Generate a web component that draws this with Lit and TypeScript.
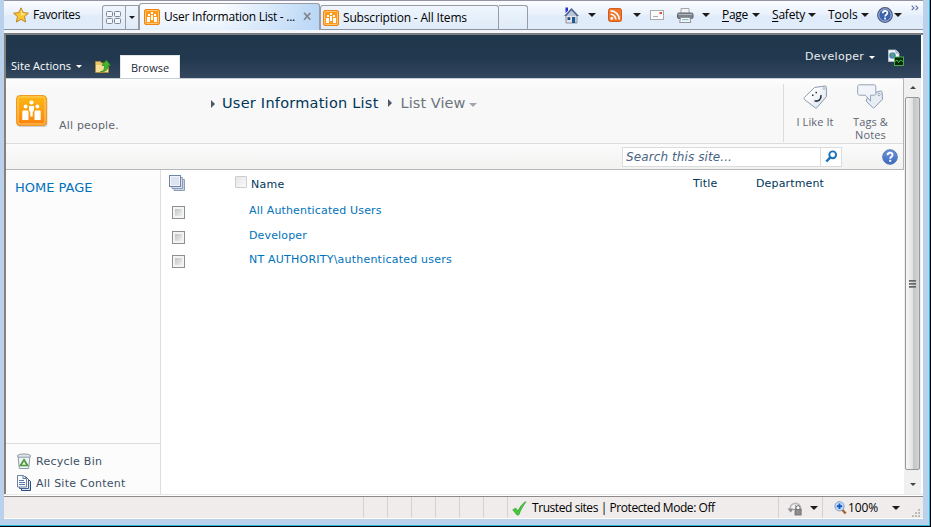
import { LitElement, html, css, svg, nothing } from "lit";
import { customElement, property } from "lit/decorators.js";

const icons: Record<string, { box: string; art: unknown }> = {
  star: { box: "0 0 16 16", art: svg`
    <path d="M8 .8l2.2 4.8 5.2.6-3.9 3.5 1.1 5.3L8 12.3l-4.6 2.7 1.1-5.3L.6 6.2l5.2-.6z" fill="#fbc62f" stroke="#b97a1e" stroke-width=".9"/>
    <path d="M8 2.6l1.5 3.6 3.6.5L8 9z" fill="#ffe88c"/>` },
  quad: { box: "0 0 16 14", art: svg`
    <g fill="#f4f7fb" stroke="#7f8797" stroke-width="1"><rect x=".5" y=".5" width="6" height="5" rx="1"/><rect x="8.5" y=".5" width="6" height="5" rx="1"/><rect x=".5" y="7.5" width="6" height="5" rx="1"/><rect x="8.5" y="7.5" width="6" height="5" rx="1"/></g>` },
  site: { box: "0 0 32 32", art: svg`
    <defs><linearGradient id="o" x2="0" y2="1"><stop offset="0" stop-color="#fdb913"/><stop offset=".6" stop-color="#fb9a10"/><stop offset="1" stop-color="#f8800f"/></linearGradient></defs>
    <rect x="1" y="1.5" width="30.5" height="30.5" rx="3.5" fill="#cfcfd3"/>
    <rect x=".5" y=".5" width="30" height="30" rx="3.5" fill="url(#o)" stroke="#f29a1f"/>
    <rect x="2" y="2" width="27" height="27" rx="2.5" fill="none" stroke="#ffd070"/>
    <g fill="#fff"><circle cx="15.5" cy="7.5" r="2.1"/><circle cx="9.6" cy="11.5" r="1.9"/><circle cx="21.4" cy="11.5" r="1.9"/>
    <path d="M13 11h5v4.500l-1.300 1.500v4.500h-2.400v-4.500l-1.300-1.500z"/>
    <path d="M7.500 15.500h3.500c.9 0 1.500.6 1.500 1.500v8H6.300v-8.300c0-.7.5-1.200 1.200-1.200zM23.500 15.500H20c-.9 0-1.500.6-1.500 1.500v8h6.200v-8.300c0-.7-.5-1.200-1.200-1.200z"/></g>` },
  tabsite: { box: "0 0 16 16", art: svg`
    <rect x=".5" y=".5" width="15" height="15" rx="1.500" fill="#fb9a1c" stroke="#f08516"/>
    <rect x="1.500" y="1.500" width="13" height="13" rx="1" fill="none" stroke="#ffc672"/>
    <g fill="#fff"><rect x="7" y="3" width="2" height="2"/><rect x="7" y="6" width="2" height="5"/><rect x="4" y="5" width="2" height="2"/><rect x="10" y="5" width="2" height="2"/><rect x="3" y="8" width="3" height="5"/><rect x="10" y="8" width="3" height="5"/></g>` },
  close: { box: "0 0 10 10", art: svg`<path d="M1.200 1l7 7.600M8.200 1l-7 7.600" stroke="#84868b" stroke-width="1.900"/>` },
  home: { box: "0 0 17 17", art: svg`
    <path d="M3 8.500h11v7.500H3z" fill="#e4e5ec" stroke="#85889a" stroke-width=".9"/>
    <path d="M2.500.500H5v3L2.500 6z" fill="#2a30cc"/>
    <path d="M8.500 1L16 9h-2.500L8.500 3.800 3.500 9H1z" fill="#4d6592"/><path d="M8.500 3.500L13.500 9h-10z" fill="#b9c6da"/>
    <rect x="9" y="10" width="3.200" height="6" fill="#1f5a94"/><rect x="4.500" y="10.200" width="2.800" height="2.800" fill="#30507c"/>` },
  rss: { box: "0 0 14 14", art: svg`
    <rect x=".5" y=".5" width="13" height="13" rx="2" fill="#ed762d" stroke="#cf5c1d"/>
    <circle cx="3.800" cy="10.400" r="1.400" fill="#fff"/><path d="M2.600 6.300a5.200 5.200 0 0 1 5.200 5.200M2.600 2.900a8.600 8.600 0 0 1 8.600 8.600" fill="none" stroke="#fff" stroke-width="1.600"/>` },
  mail: { box: "0 0 14 10", art: svg`
    <rect x=".5" y=".5" width="13" height="9" fill="#fafafa" stroke="#a9a9ad"/><rect x="9.500" y="2" width="2.500" height="2" fill="#e0503c"/><path d="M3 6.500h5" stroke="#aab"/>` },
  print: { box: "0 0 17 15", art: svg`
    <path d="M4 .5h8v5H4z" fill="#f3f3f5" stroke="#a5a8ae"/>
    <rect x=".5" y="5" width="15.500" height="5.500" rx="1.500" fill="#7e838b" stroke="#5c6169"/>
    <path d="M1.500 6.400h13.500" stroke="#b9bdc4"/><path d="M3.500 9.500h9.500l.8 5H2.700z" fill="#f7f8fa" stroke="#8f949c"/><path d="M5 11.700h6.500" stroke="#73b3b9"/>` },
  help: { box: "0 0 16 16", art: svg`
    <defs><linearGradient id="h" x2="0" y2="1"><stop offset="0" stop-color="#6f96dc"/><stop offset="1" stop-color="#3a66c0"/></linearGradient></defs>
    <circle cx="8" cy="8" r="7.300" fill="url(#h)" stroke="#5475b3"/>
    <path d="M5.600 6.300c0-3.500 5-3.300 4.900-.3 0 1.700-2.300 1.800-2.300 3.700" fill="none" stroke="#fff" stroke-width="1.900"/><rect x="7.200" y="10.800" width="2" height="2" fill="#fff"/>` },
  helpdark: { box: "0 0 16 16", art: svg`
    <circle cx="8" cy="8" r="7.300" fill="#3c62ae" stroke="#4c5878" stroke-width="1.200"/><circle cx="8" cy="8" r="6.200" fill="none" stroke="#b5c6e6" stroke-width=".9"/>
    <path d="M5.700 6.300c0-3.300 4.800-3.200 4.700-.3 0 1.700-2.300 1.800-2.300 3.500" fill="none" stroke="#fff" stroke-width="1.700"/><rect x="7.200" y="10.600" width="1.800" height="1.800" fill="#fff"/>` },
  chev: { box: "0 0 8 6", art: svg`<path d="M.7.600L3 2.900.7 5.200M4.600.600l2.300 2.300-2.300 2.300" fill="none" stroke="#5b6cab" stroke-width="1.100"/>` },
  folderup: { box: "0 0 16 14", art: svg`
    <path d="M.5 2.500h5l1 1.500h7v9.500H.5z" fill="#e9c667" stroke="#b48d38" stroke-width=".8"/><path d="M1 6h12v7H1z" fill="#f8df96"/>
    <path d="M5.500 12.500C9 12.500 9.500 10 9.500 6.500H7L11.300 1 15.600 6.500H13.200C13.200 11 10 13 5.500 12.500z" fill="#46b62f" stroke="#23851b" stroke-width=".7"/>` },
  dash: { box: "0 0 17 17", art: svg`
    <path d="M1.500 1h7.500l3 3v8.500h-10.500z" fill="#f3f5f9" stroke="#b9c4d6" stroke-width=".8"/><path d="M9 1v3h3" fill="none" stroke="#8a9ab5"/>
    <circle cx="5.500" cy="6.500" r="3.300" fill="#4a86c2"/><path d="M4 4l3 1-1 3-2-1z" fill="#57a84b"/>
    <rect x="7.500" y="8" width="9" height="8.500" fill="#062a08" stroke="#56b356" stroke-width=".9"/><path d="M8 12.500l2-1.500 1.500 2.500 2-2.500 2.500 1.500" fill="none" stroke="#45d245" stroke-width=".9"/>` },
  like: { box: "0 0 25 26", art: svg`
    <defs><linearGradient id="g" x1="0" y1="0" x2="1" y2="1"><stop offset=".3" stop-color="#fff"/><stop offset="1" stop-color="#d5deea"/></linearGradient></defs>
    <path d="M11.500 3.500L22 2c.9 0 1.300.4 1.300 1.200l.2 9.300L14 23.500c-.7.700-1.500.7-2.200 0L1.500 15.500c-.6-.7-.5-1.400 0-2.200z" fill="url(#g)" stroke="#8a9ab0"/>
    <circle cx="21" cy="4.500" r="1" fill="#fff" stroke="#8a9ab0" stroke-width=".7"/>
    <path d="M11.500 16.700c3.700 1.300 7-1 6.500-5.500" fill="none" stroke="#27313f" stroke-width="1.600"/><rect x="9" y="10.500" width="1.500" height="1.500" fill="#27313f"/><rect x="12.500" y="7.800" width="1.500" height="1.500" fill="#27313f"/>` },
  tags: { box: "0 0 27 26", art: svg`
    <path d="M12 10.500L23.500 7c1 0 1.500.4 1.500 1.200l.5 7-8 8.300c-.7.700-1.200.6-1.800 0L9 17z" fill="#e6edf5" stroke="#8a9ab0"/>
    <circle cx="22" cy="10.500" r="1.200" fill="#fff" stroke="#8a9ab0" stroke-width=".8"/>
    <path d="M2.500.800h14.500c1 0 1.800.7 1.800 1.700v7c0 1-.8 1.700-1.800 1.700h-3.500v6l-5-6h-6c-1 0-1.800-.7-1.800-1.700v-7c0-1 .8-1.700 1.800-1.700z" fill="#f1f5fb" stroke="#93a2b8"/>` },
  search: { box: "0 0 13 13", art: svg`<circle cx="7.700" cy="4.800" r="3.400" fill="#fff" stroke="#1a72bd" stroke-width="1.900"/><path d="M5.300 7.400L1.300 11.500" stroke="#1a72bd" stroke-width="2.400"/>` },
  sheets: { box: "0 0 16 16", art: svg`
    <g stroke="#8f9fba"><path d="M5 4.500h10.500v11H5z" fill="#c6d1e3"/><path d="M3 2.500h10.500v11H3z" fill="#d8e0ed"/><rect x=".5" y=".5" width="11" height="11" fill="#f1f5fb" stroke="#7184a5"/></g><rect x="2" y="2" width="8" height="8" fill="#dbe4f0"/>` },
  bin: { box: "0 0 14 16", art: svg`
    <path d="M1 2.500h12l-1.300 13H2.300z" fill="#eff3f5" stroke="#8d9aa6"/><path d="M.5 2.500C2 .500 12 .500 13.500 2.500L13 4.200H1z" fill="#dfe6ea" stroke="#8693a0" stroke-width=".9"/>
    <path d="M7 6.800l3.500 5.700H3.500z" fill="none" stroke="#4a9a3c" stroke-width="1.700"/>` },
  docs: { box: "0 0 14 16", art: svg`
    <path d="M4.500 3.500h6l3 3v9h-9z" fill="#dce6f2" stroke="#274b7a"/>
    <path d="M2.500 1.500h6l3 3v9h-9z" fill="#eef3fa" stroke="#43628e"/><path d="M.5.500h6l3 3v8.500h-9z" fill="#fafcff" stroke="#6f829f"/>
    <path d="M6 .500v3h3M2 5.500h5M2 7.500h6M2 9.500h6" fill="none" stroke="#5879ab"/>` },
  check: { box: "0 0 15 15", art: svg`<path d="M.8 8.800l3-1.600 2.200 3C8 5.500 10.500 2.200 14 .7 11 4.800 8.500 9.200 6.700 14H5z" fill="#43c93a" stroke="#3da538" stroke-width=".8"/>` },
  privacy: { box: "0 0 17 15", art: svg`
    <path d="M3.500 8.500a5.500 5.500 0 1 1 8.500 4" fill="#f4f4f4" stroke="#bdbdbd" stroke-width="1.800"/><path d="M.500 7.500h6.500L4 11.500z" fill="#8d8d8d"/><path d="M9 4v4l-3 1" fill="none" stroke="#999"/>
    <rect x="8.500" y="8.500" width="6.500" height="5.500" fill="#8c8c8c" stroke="#666" stroke-width=".8"/><path d="M9.800 8.500V6.500a2 2 0 0 1 4 0v2" fill="none" stroke="#777"/>` },
  zoom: { box: "0 0 13 14", art: svg`
    <path d="M8 8.500l3.700 4" stroke="#a4622c" stroke-width="2.400"/><circle cx="5.500" cy="5.300" r="4.600" fill="#c6e0fa" stroke="#7e9dc4"/><path d="M5.500 2.600v5.400M2.800 5.300h5.400" stroke="#1556c0" stroke-width="1.900"/>` },
  grip: { box: "0 0 9 9", art: svg`<g fill="#b5b0b0"><rect x="7" y="0" width="2" height="2"/><rect x="3.500" y="3.500" width="2" height="2"/><rect x="7" y="3.500" width="2" height="2"/><rect x="0" y="7" width="2" height="2"/><rect x="3.500" y="7" width="2" height="2"/><rect x="7" y="7" width="2" height="2"/></g>` },
};

@customElement("ui-icon")
class UiIcon extends LitElement {
  @property() name = "";
  static styles = css`:host{display:block;line-height:0;flex:none} svg{display:block;width:100%;height:100%}`;
  render() {
    const i = icons[this.name];
    return i ? html`<svg viewBox=${i.box} preserveAspectRatio="none">${i.art}</svg>` : nothing;
  }
}

const caret = css`
  .caret{box-sizing:border-box;flex:none;width:8px;height:4px;border:4px solid transparent;border-top-color:#1c1c1c;border-bottom:0}
  .caret.s{width:6px;height:3px;border-width:3px;border-bottom:0}
`;

@customElement("browser-bar")
class BrowserBar extends LitElement {
  static styles = [caret, css`
    :host{display:flex;box-sizing:border-box;height:30px;border-top:1px solid #9492a5;
      background:linear-gradient(#8d92a0,#8d92a0) 0 100%/100% 1px no-repeat,linear-gradient(#fbfcff,#e9f1fb 45%,#dfebf9 55%,#e1edfa);
      font:12px/16px "Open Sans","Noto Sans",sans-serif;color:#000;align-items:flex-start;white-space:nowrap}
    .fav{display:flex;align-items:center;gap:4px;width:98px;padding:0 0 0 9px;box-sizing:border-box;height:28px;letter-spacing:-.42px}
    .fav ui-icon{width:16px;height:16px}
    .c{box-sizing:border-box;height:25px;border:1px solid #9b9ba3;border-bottom-color:#8d92a0;margin-top:4px;background:linear-gradient(#eef5fd,#dfebf8);flex:none}
    .quick{border-radius:3px 0 0 0;padding:5px 0 0 3px;width:24px}
    .quick ui-icon{width:16px;height:14px}
    .drop{border-left:0;display:flex;align-items:center;justify-content:center;width:13px}
    .tab{display:flex;align-items:center;border-radius:3px 3px 0 0;padding-left:2px;gap:4px;width:179px}
    .tab ui-icon.s{width:16px;height:16px}
    .active{width:181px;height:27px;margin-top:2px;border-bottom:0;padding:0 0 1px 4px;background:linear-gradient(90deg,#fff0 45%,#b9d7f6),linear-gradient(#fcfdff,#e9f2fc);letter-spacing:-.25px}
    .second{letter-spacing:-.17px}
    .x{width:9px;height:9px;margin:0 7px 0 auto}
    .new{border-left:0;width:29px;border-radius:0 3px 0 0}
    .tools{display:flex;align-items:center;height:28px}
    .home{width:17px;height:17px;margin-left:35px}.rss{width:14px;height:14px;margin-left:12px}
    .mail{width:14px;height:10px;margin-left:9px}.print{width:17px;height:15px;margin-left:13px}
    .help{width:16px;height:16px;margin-left:8px}
    .g8{margin-left:8px}.g11{margin-left:11px}.g1{margin-left:1px}
    .menu{display:flex;align-items:center;justify-content:space-between;margin-left:12px}
    .page{width:38px;letter-spacing:-.29px}.safety{width:44px;letter-spacing:-.22px}.toolm{width:41px}
    .chev{width:8px;height:6px;align-self:flex-start;margin:4px 0 0 9px}
    u{text-decoration-thickness:1px;text-underline-offset:2px}
  `];
  render() {
    return html`
      <div class="fav"><ui-icon name="star"></ui-icon><span>Favorites</span></div>
      <div class="c quick"><ui-icon name="quad"></ui-icon></div>
      <div class="c drop"><i class="caret s"></i></div>
      <div class="c tab active"><ui-icon class="s" name="tabsite"></ui-icon><span>User Information List - ...</span><ui-icon class="x" name="close"></ui-icon></div>
      <div class="c tab second"><ui-icon class="s" name="tabsite"></ui-icon><span>Subscription - All Items</span></div>
      <div class="c new"></div>
      <div class="tools">
        <ui-icon class="home" name="home"></ui-icon><i class="caret g8"></i>
        <ui-icon class="rss" name="rss"></ui-icon><i class="caret g11"></i>
        <ui-icon class="mail" name="mail"></ui-icon>
        <ui-icon class="print" name="print"></ui-icon><i class="caret g8"></i>
        <div class="menu page"><span><u>P</u>age</span><i class="caret"></i></div>
        <div class="menu safety"><span><u>S</u>afety</span><i class="caret"></i></div>
        <div class="menu toolm"><span>T<u>o</u>ols</span><i class="caret"></i></div>
        <ui-icon class="help" name="helpdark"></ui-icon><i class="caret g1"></i>
        <ui-icon class="chev" name="chev"></ui-icon>
      </div>`;
  }
}

@customElement("site-ribbon")
class SiteRibbon extends LitElement {
  static styles = [caret, css`
    :host{display:flex;flex:none;box-sizing:border-box;height:43px;background:linear-gradient(#21374c,#22384e 55%,#33475f);color:#fff;white-space:nowrap;font:11px/14px "Open Sans",sans-serif}
    .caret.s{border-top-color:#fff}
    .actions{display:flex;align-items:center;gap:5px;padding-left:5px;width:89px;height:18px;margin-top:22px;box-sizing:border-box;letter-spacing:.06px}
    .up{width:16px;height:14px;margin-top:24px}
    .browse{width:60px;height:23px;box-sizing:border-box;margin:20px 0 0 9px;background:#fff;color:#1e2a36;border:1px solid #e4e7ea;border-bottom:0;text-align:center;line-height:24px}
    .user{margin:14px 17px 0 auto;height:16px;display:flex;align-items:center;font:11px/14px "DejaVu Sans",sans-serif;letter-spacing:.27px;gap:5px;color:#e8ecf0}
    .user ui-icon{width:17px;height:17px;margin-left:7px}
  `];
  render() {
    return html`
      <div class="actions"><span>Site Actions</span><i class="caret s"></i></div>
      <ui-icon class="up" name="folderup"></ui-icon>
      <div class="browse">Browse</div>
      <div class="user"><span>Developer</span><i class="caret s"></i><ui-icon name="dash"></ui-icon></div>`;
  }
}

@customElement("title-area")
class TitleArea extends LitElement {
  static styles = [caret, css`
    :host{display:block;flex:none;box-sizing:border-box;width:898px;height:92px;border-top:1px solid #c9cfd6;border-right:1px solid #b3b5b8;border-bottom:1px solid #b6b8bb;background:#f8f8f8;white-space:nowrap;color:#5e6670}
    .head{display:flex;box-sizing:border-box;height:65px;border-bottom:1px solid #dcdcdc;background:linear-gradient(#fdfdfd,#f8f8f8 12px)}
    .logo{width:32px;height:32px;margin:16px 0 0 10px}
    .sub{width:151px;margin:40px 0 0 11px;line-height:14px;letter-spacing:.19px}
    .crumbs{display:flex;align-items:center;height:20px;margin-top:14px;font-size:14.5px;color:#003759;flex:1}
    .arrow{width:4px;height:8px;box-sizing:border-box;border:4px solid transparent;border-left-color:#4c596b;border-right:0}
    .crumbs .first{margin:2px 7px 0 1px}
    .list{letter-spacing:.24px}
    .crumbs .second{margin:0 9px 0 9px}
    .view{color:#6d747d;letter-spacing:.05px;margin-right:4px}
    .crumbs .caret{border-top-color:#a0a5ad;margin-top:3px}
    .social{display:flex;height:58px;margin-top:5px;border-left:1px solid #dcdcdc;width:119px;font:11px/13px "Open Sans",sans-serif;letter-spacing:.1px;text-align:center;color:#5d6675}
    .social div{display:flex;flex-direction:column;align-items:center;width:62px}
    .social div+div{width:49px}
    .like{width:25px;height:26px;margin-bottom:5px}.tags{width:27px;height:26px;margin-bottom:5px}
    .bar{display:flex;align-items:center;justify-content:flex-end;height:25px;background:linear-gradient(#fbfbfb,#f2f2f1)}
    .box{display:flex;box-sizing:border-box;width:220px;height:20px;border:1px solid #dcdcde;background:#fff;font:italic 12px/18px "DejaVu Sans",sans-serif;color:#476382;letter-spacing:.1px}
    .box span{flex:1;padding-left:3px}
    .go{display:flex;align-items:center;justify-content:center;width:20px;border-left:1px solid #dcdcde}
    .go ui-icon{width:13px;height:13px}
    .help{width:16px;height:16px;margin:0 5px 0 40px}
  `];
  render() {
    return html`
      <div class="head">
        <ui-icon class="logo" name="site"></ui-icon>
        <div class="sub">All people.</div>
        <div class="crumbs"><i class="arrow first"></i><span class="list">User Information List</span><i class="arrow second"></i><span class="view">List View</span><i class="caret"></i></div>
        <div class="social">
          <div><ui-icon class="like" name="like"></ui-icon>I Like It</div>
          <div><ui-icon class="tags" name="tags"></ui-icon>Tags &amp;<br>Notes</div>
        </div>
      </div>
      <div class="bar">
        <div class="box"><span>Search this site...</span><div class="go"><ui-icon name="search"></ui-icon></div></div>
        <ui-icon class="help" name="help"></ui-icon>
      </div>`;
  }
}

@customElement("side-nav")
class SideNav extends LitElement {
  static styles = css`
    :host{display:flex;flex-direction:column;justify-content:space-between;box-sizing:border-box;width:155px;border-right:1px solid #dbddde;background:#fcfcfc;white-space:nowrap;color:#3b4f65}
    .home{margin:10px 0 0 9px;font-size:13px;line-height:16px;color:#0072bc}
    .foot{border-top:1px solid #dbddde;height:51px;box-sizing:border-box;padding:6px 0 0 11px}
    .foot div{display:flex;align-items:center;height:22px;gap:5px;letter-spacing:.25px}
    ui-icon{width:14px;height:16px}
  `;
  render() {
    return html`
      <div class="home">HOME PAGE</div>
      <div class="foot"><div><ui-icon name="bin"></ui-icon>Recycle Bin</div><div><ui-icon name="docs"></ui-icon>All Site Content</div></div>`;
  }
}

const users = ["All Authenticated Users", "Developer", "NT AUTHORITY\\authenticated users"];

@customElement("user-list")
class UserList extends LitElement {
  static styles = css`
    :host{display:block;flex:1;background:#fff;white-space:nowrap;line-height:14px}
    .row{display:grid;grid-template-columns:88px 444px 63px 1fr;height:24.5px;color:#0072bc;letter-spacing:.15px}
    .head{height:29px;color:#003759;padding-top:5px;box-sizing:border-box}
    .head>span{margin-top:2px}
    .sheets{width:16px;height:16px;margin-left:8px}
    .name{display:flex;margin-left:-14px;gap:4px;letter-spacing:.3px}
    .name b{font-weight:400;margin-top:3px}
    .ghost{width:12px;height:12px;box-sizing:border-box;border:1px solid #cdcdcd;border-radius:1px;background:linear-gradient(135deg,#e6e6e6,#fafafa);margin-top:1px}
    .check{width:13px;height:13px;box-sizing:border-box;border:1px solid #8e8f8f;background:linear-gradient(135deg,#bfc3c6,#f0f0f0) content-box,#f4f4f4;padding:2px;margin:7px 0 0 11px}
    .link{margin-top:5px}
    .nt{letter-spacing:.22px}
  `;
  render() {
    return html`
      <div class="row head"><ui-icon class="sheets" name="sheets"></ui-icon><div class="name"><i class="ghost"></i><b>Name</b></div><span>Title</span><span>Department</span></div>
      ${users.map(u => html`<div class="row"><i class="check"></i><span class="link ${u.startsWith("NT") ? "nt" : ""}">${u}</span></div>`)}`;
  }
}

@customElement("scroll-rail")
class ScrollRail extends LitElement {
  static styles = [caret, css`
    :host{display:flex;flex-direction:column;box-sizing:border-box;background:#f0f0f0;align-items:center}
    .end{height:19px;display:flex;align-items:center}
    .caret.s{border-top-color:#444}
    .up{transform:scaleY(-1)}
    .thumb{flex:1;width:15px;box-sizing:border-box;border:1px solid #97979b;border-radius:2px;background:linear-gradient(90deg,#f4f4f4 10%,#e2e2e4 50%,#c4c5c9 55%,#d4d4d8);display:flex;flex-direction:column;align-items:center;justify-content:center;gap:1px;margin-bottom:5px}
    .thumb b{width:7px;height:2px;background:linear-gradient(#555,#999)}
  `];
  render() {
    return html`<div class="end"><i class="caret s up"></i></div><div class="thumb"><b></b><b></b><b></b></div><div class="end"><i class="caret s"></i></div>`;
  }
}

@customElement("status-bar")
class StatusBar extends LitElement {
  static styles = [caret, css`
    :host{display:flex;box-sizing:border-box;height:22px;border-bottom:1px solid #fff;background:#f0eceb;font:12px/20px "Open Sans",sans-serif;color:#000;white-space:nowrap}
    .pane{box-sizing:border-box;width:24px;border-left:1px solid #d5d1d1;display:flex;align-items:center;padding-top:1px}
    .first{margin-left:359px}
    .zone{width:271px;letter-spacing:-.43px;padding-left:4px;gap:5px}
    .zone ui-icon{width:15px;height:15px}
    .priv{width:44px;padding-left:8px;gap:7px}
    .priv ui-icon{width:16px;height:15px}
    .zoom{width:98px;padding-left:11px;letter-spacing:-.1px}
    .zoom ui-icon{width:13px;height:14px;margin-right:1px}
    .zoom .caret{margin-left:14px}
    .zoom .grip{width:8px;height:8px;margin:10px 0 0 12px}
  `];
  render() {
    return html`
      ${[0, 1, 2, 3, 4, 5].map(n => html`<div class="pane ${n ? "" : "first"}"></div>`)}
      <div class="pane zone"><ui-icon name="check"></ui-icon>Trusted sites | Protected Mode: Off</div>
      <div class="pane priv"><ui-icon name="privacy"></ui-icon><i class="caret"></i></div>
      <div class="pane zoom"><ui-icon name="zoom"></ui-icon>100%<i class="caret"></i><ui-icon class="grip" name="grip"></ui-icon></div>`;
  }
}

@customElement("app-root")
class AppRoot extends LitElement {
  static styles = css`
    :host{display:block;box-sizing:border-box;width:931px;height:527px;overflow:hidden;background:#000;font:11px "DejaVu Sans",Verdana,sans-serif;padding:0 1px 1px 0}
    .frame{box-sizing:border-box;width:930px;height:526px;border-right:1px solid #27b7d8;border-bottom:1px solid #27b7d8;background:#b9d1ea;padding:0 6px 5px 4px;display:flex;flex-direction:column}
    browser-bar,.view,status-bar{flex:none}
    .view{height:467px;box-sizing:border-box;border-top:3px solid #f3f7fc;background:#fff;display:flex;flex-direction:column}
    .page{box-sizing:border-box;border-top:2px solid #7b7c80;border-left:2px solid #85817f;height:461px;display:flex;flex-direction:column;padding-right:2px}
    .below{display:flex;flex:1;min-height:0}
    .main{width:898px;flex:none;display:flex;flex-direction:column}
    .cols{display:flex;flex:1}
    scroll-rail{flex:1}
    .edge{height:3px;box-sizing:border-box;border-top:1px solid #e9e9e9;border-bottom:1px solid #8b8b8d;background:#fff}
  `;
  render() {
    return html`<div class="frame">
      <browser-bar></browser-bar>
      <div class="view">
        <div class="page">
          <site-ribbon></site-ribbon>
          <div class="below">
            <div class="main"><title-area></title-area><div class="cols"><side-nav></side-nav><user-list></user-list></div></div>
            <scroll-rail></scroll-rail>
          </div>
        </div>
        <div class="edge"></div>
      </div>
      <status-bar></status-bar>
    </div>`;
  }
}
